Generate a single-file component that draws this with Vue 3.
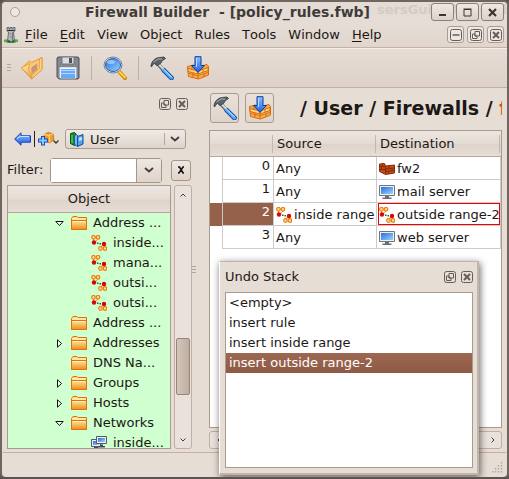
<script setup>
import { ref } from 'vue'

const menus = [
  { key: 'F', rest: 'ile', mnemonic: true },
  { key: 'E', rest: 'dit', mnemonic: true },
  { key: 'V', rest: 'iew' },
  { key: 'O', rest: 'bject' },
  { key: 'R', rest: 'ules' },
  { key: 'T', rest: 'ools' },
  { key: 'W', rest: 'indow' },
  { key: 'H', rest: 'elp', mnemonic: true },
]

const tree = [
  { label: 'Address ...', icon: 'folder', state: 'open' },
  { label: 'inside...', icon: 'range', child: true },
  { label: 'mana...', icon: 'range', child: true },
  { label: 'outsi...', icon: 'range', child: true },
  { label: 'outsi...', icon: 'range', child: true },
  { label: 'Address ...', icon: 'folder' },
  { label: 'Addresses', icon: 'folder', state: 'closed' },
  { label: 'DNS Na...', icon: 'folder' },
  { label: 'Groups', icon: 'folder', state: 'closed' },
  { label: 'Hosts', icon: 'folder', state: 'closed' },
  { label: 'Networks', icon: 'folder', state: 'open' },
  { label: 'inside...', icon: 'network', child: true },
]

const rules = [
  { source: 'Any', destination: 'fw2', icon: 'firewall' },
  { source: 'Any', destination: 'mail server', icon: 'host' },
  { source: 'inside range', sourceIcon: 'range', destination: 'outside range-2', icon: 'range', selected: true },
  { source: 'Any', destination: 'web server', icon: 'host' },
]

const history = ['<empty>', 'insert rule', 'insert inside range', 'insert outside range-2']
const current = ref(3)
const filter = ref('')
const library = ref('User')
</script>

<template>
  <svg class="sprite" aria-hidden="true">
    <defs>
      <linearGradient id="g-folder" x1="0" y1="0" x2="0" y2="1"><stop offset="0" stop-color="#ffe59a" /><stop offset="1" stop-color="#ee8e1c" /></linearGradient>
      <linearGradient id="g-blue" x1="0" y1="0" x2="1" y2="1"><stop offset="0" stop-color="#2a6fd8" /><stop offset="1" stop-color="#9ad4ff" /></linearGradient>
      <linearGradient id="g-arrow" x1="0" y1="0" x2="0" y2="1"><stop offset="0" stop-color="#8cc0ff" /><stop offset="1" stop-color="#1f5fe8" /></linearGradient>
      <linearGradient id="g-open" x1="0" y1="0" x2="1" y2="1"><stop offset="0" stop-color="#fff0c4" /><stop offset="1" stop-color="#f0a030" /></linearGradient>
    </defs>
    <symbol id="folder" viewBox="0 0 16 14">
      <path d="M.5 13.500V2.500L2 .5h4l1 1h8.500v12z" fill="#ffe08a" stroke="#e0700c" />
      <path d="M.5 4.500h15v9H.5z" fill="url(#g-folder)" stroke="#e0700c" />
      <path d="M1.500 3h13M2 5.500h12" stroke="#fff3c0" />
    </symbol>
    <symbol id="range" viewBox="0 0 16 16">
      <path d="M2.500 4v3M7 4L4 7M10 13l2-4M14 13l-1-4" stroke="#f08a20" fill="none" />
      <g fill="#ffe08a" stroke="#ee7a10" stroke-width="1.200"><circle cx="2.500" cy="2.300" r="1.800" /><circle cx="7" cy="2.300" r="1.800" /><circle cx="9.500" cy="13.500" r="1.800" /><circle cx="14" cy="13.500" r="1.800" /></g>
      <circle cx="3" cy="7.500" r="2.200" fill="#d40808" /><circle cx="13" cy="9" r="2.200" fill="#d40808" />
      <path d="M6 7.500h1.500v1.500H6zM8.500 8H10v1.500H8.500z" fill="#1a6a28" />
    </symbol>
    <symbol id="host" viewBox="0 0 16 14">
      <path d="M.5 .5h15v10H.5z" fill="#eef0f2" stroke="#70757c" />
      <path d="M2 2h12v7H2z" fill="url(#g-blue)" />
      <path d="M6 11h4v1.500h2.500V14h-9v-1.500H6z" fill="#6c7076" />
    </symbol>
    <symbol id="network" viewBox="0 0 16 14">
      <path d="M.5 3.500h9v7h-9z" fill="#e8eef4" stroke="#555b64" /><path d="M2 5h6v4H2z" fill="url(#g-blue)" />
      <path d="M3 11h4v1h1v1.500H1V12h2zM9 8.500h3v1.500h2v1.500H7V10h2z" fill="#444950" />
      <path d="M5.500 .5h10v7h-10z" fill="#e8eef4" stroke="#555b64" /><path d="M7 2h7v4H7z" fill="url(#g-blue)" />
    </symbol>
    <symbol id="firewall" viewBox="0 0 16 12">
      <path d="M.5 1l5-.5 1 2.500 9-1v8l-9 1.500-6-3z" fill="#c04a12" stroke="#8a2c06" />
      <path d="M1 3.500h5.500v2.500l9-1M1 6.500h5.500v2l9-1M3.500 1v2.500M2.500 4v2.500M10 3v2.500M13 5.500v2.500M6.500 5v6M9.500 8.500v2.500" stroke="#7c2605" stroke-width=".8" fill="none" />
    </symbol>
    <symbol id="hammer" viewBox="0 0 24 24">
      <path d="M13.500 14l8 8" stroke="#0c49ae" stroke-width="4.600" stroke-linecap="round" />
      <path d="M13.500 14l8 8" stroke="#55aaf5" stroke-width="3" stroke-linecap="round" />
      <path d="M14 13.500l7.500 7.500" stroke="#e2f4ff" />
      <path d="M7.500 7.500l5.500 6" stroke="#6b7075" stroke-width="4" />
      <path d="M8 7.500l5.500 5.500" stroke="#d5dade" stroke-width="2" />
      <path d="M1 10.500C1 6.500 4 2 9.500 1.500L14 1l1.500 1.500-3 2-2 3-3.500 2L4.500 7.500C3.500 8 2.500 9 2 10.500z" fill="#5c636a" stroke="#30353a" stroke-width=".8" />
      <path d="M3.500 6L8 3h4" stroke="#aeb6bd" fill="none" />
    </symbol>
    <symbol id="install" viewBox="0 0 24 24">
      <path d="M1.500 10.500l6-1.500 4 2 9.500-2.500 1.500 2v8.500L12.500 23l-10-2.500z" fill="#f8ac4a" stroke="#d86b08" />
      <path d="M2 12.500l10 2.500 10-3.500v3l-10 3.500-10-2.500zM3 17.500l9 2 10-3" fill="#ffd388" stroke="#d86b08" />
      <path d="M6 9.500v4M17 13.500v3M7 17v4M18 18v3M12 15v8" stroke="#d86b08" />
      <path d="M9 .7h6v8.800h3.500L12 16.500 5.500 9.500H9z" fill="url(#g-arrow)" stroke="#083f9e" />
      <path d="M10.500 2v9" stroke="#b4dcff" />
    </symbol>
    <symbol id="open" viewBox="0 0 24 24">
      <path d="M1.500 12l8-7 2 1.500L22 1.500v12L11.500 23z" fill="#fbc768" stroke="#e08a28" stroke-width=".8" />
      <path d="M10 12l8-6v8l-7 6z" fill="#d9a67c" stroke="#f3d3a4" stroke-width=".8" />
      <path d="M12 11l5-3v5l-5 4z" fill="#c9966c" />
      <path d="M1.500 12l8-4.500L8.500 13l4 9.500z" fill="url(#g-open)" stroke="#eb9a38" stroke-width=".8" />
      <path d="M11.500 23L22 13.500V1.500l-2.500 1.500v9.500L12 19.500z" fill="#ffd272" stroke="#e08a28" stroke-width=".6" />
    </symbol>
    <symbol id="save" viewBox="0 0 24 24">
      <path d="M1 2l1-1h20l1 1v20l-1 1H3l-2-2z" fill="#848891" stroke="#4e5158" />
      <path d="M6 1h12v7H6z" fill="#d8dce3" stroke="#74777d" /><path d="M13 2h3v5h-3z" fill="#4e5158" />
      <path d="M4 11.500h16V22H4z" fill="#f5faff" stroke="#d4dce8" /><path d="M5 13h14v9H5z" fill="#69a9fb" /><path d="M5 14.500h14M5 17.500h14" stroke="#b4d8ff" />
    </symbol>
    <symbol id="find" viewBox="0 0 24 24">
      <path d="M16.500 16l5.500 6" stroke="#c98200" stroke-width="4" stroke-linecap="round" /><path d="M16.500 16l5.500 5.500" stroke="#ffd64c" stroke-width="2" stroke-linecap="round" />
      <ellipse cx="10" cy="9" rx="9" ry="8" fill="#dce7f2" stroke="#78818f" /><ellipse cx="10" cy="9" rx="7.500" ry="6.500" fill="url(#g-blue)" stroke="#2463b7" />
      <ellipse cx="8" cy="6" rx="4" ry="2" fill="#c7e3ff" opacity=".6" />
    </symbol>
    <symbol id="tower" viewBox="0 0 14 16">
      <ellipse cx="7" cy="14" rx="6.500" ry="2" fill="#3a9a32" />
      <path d="M3.500 14.500l1-9.500L3 4V.5h2V2h1V.5h2V2h1V.5h2V4L9.500 5l1 9.500z" fill="#b4b6ba" stroke="#55585e" stroke-width=".8" />
      <path d="M3.500 3.500h7M4 14h2M8 14h2" stroke="#26292d" /><path d="M8.500 5.500v8" stroke="#73767c" /><path d="M5.500 7h1M6.500 10h1" stroke="#55585e" />
      <path d="M0 12.500h2.500v2.500H0zM11.500 12.500H14V15h-2.500z" fill="#4cb63e" />
    </symbol>
    <symbol id="back" viewBox="0 0 17 14">
      <path d="M.7 7L7 .8v3h9.500v6.400H7v3z" fill="url(#g-arrow)" stroke="#1640bc" /><path d="M3 6.500L6 4.500h9" stroke="#c5e4ff" fill="none" />
    </symbol>
    <symbol id="add" viewBox="0 0 22 14">
      <path d="M6 2.500L10 .5l5 1 1 6-4 3.500-5-2z" fill="#f59b24" stroke="#b96b14" stroke-width=".7" /><path d="M6 2.500l5 1 4-2M11 3.500l1 7" stroke="#ffe099" fill="none" />
      <path d="M5 4v9.500M0 8.500h10" stroke="#1451ba" stroke-width="4" /><path d="M5 5v7.500M1 8.500h8" stroke="#8cc9ff" stroke-width="2" />
      <path d="M15.500 8.500l2.500 2.500 2.500-2.500" stroke="#3c352f" fill="none" stroke-width="1.300" />
    </symbol>
    <symbol id="books" viewBox="0 0 14 15">
      <path d="M.5 1.500l4-1 2 2v10l-2 1-4-2z" fill="#168924" stroke="#075813" /><path d="M2 3v8" stroke="#83d787" />
      <path d="M4.500 3.500l2-1 2 2v9l-2 .5-2-2z" fill="#76b7f5" stroke="#195cae" /><path d="M7.500 4.500l5.500-2v9.500l-5.500 2.500z" fill="#55a3ef" stroke="#124f9d" />
      <path d="M9 6l3-1v3L9 9z" fill="#c4e5ff" />
    </symbol>
    <symbol id="float" viewBox="0 0 12 12">
      <rect x=".5" y=".5" width="11" height="11" rx="2" fill="none" stroke="#655e58" /><path d="M5 2.500h4.500V7H5zM2.500 5H5v2h2v2.500H2.500z" fill="none" stroke="#655e58" />
    </symbol>
    <symbol id="shut" viewBox="0 0 12 12">
      <rect x=".5" y=".5" width="11" height="11" rx="2" fill="none" stroke="#655e58" /><path d="M3 3l6 6M9 3L3 9" stroke="#655e58" stroke-width="2" />
    </symbol>
    <symbol id="mini" viewBox="0 0 12 12">
      <rect x=".5" y=".5" width="11" height="11" rx="2" fill="none" stroke="#655e58" /><path d="M2.500 6h7" stroke="#655e58" stroke-width="1.500" />
    </symbol>
    <symbol id="down" viewBox="0 0 10 6"><path d="M1 1l4 3.500L9 1" fill="none" stroke="#433d38" stroke-width="1.800" /></symbol>
    <symbol id="thin" viewBox="0 0 6 4"><path d="M.5 .5L3 3 5.500 .5" fill="none" stroke="#433d38" /></symbol>
  </svg>

  <main class="window">
    <header class="titlebar">
      <span class="ghost" aria-hidden="true">sersGuide4) - ged</span>
      <span class="orb"></span>
      <h1>Firewall Builder&nbsp; - [policy_rules.fwb]</h1>
      <div class="frame-buttons">
        <button aria-label="Minimize"><svg viewBox="0 0 9 9"><path d="M1 7h7" stroke="#3b3632" stroke-width="2" /></svg></button>
        <button aria-label="Maximize"><svg viewBox="0 0 9 9"><path d="M1 1.500h7v6.500H1zM.5 1h8" fill="none" stroke="#3b3632" /></svg></button>
        <button aria-label="Close"><svg viewBox="0 0 9 9"><path d="M1 1l7 7M8 1L1 8" stroke="#3b3632" stroke-width="2.200" /></svg></button>
      </div>
    </header>

    <nav class="menubar">
      <svg class="tower"><use href="#tower" /></svg>
      <button v-for="m in menus" :key="m.key" class="menu"><span :class="{ mnemonic: m.mnemonic }">{{ m.key }}</span>{{ m.rest }}</button>
      <div class="mdi">
        <button aria-label="Minimize document"><svg><use href="#mini" /></svg></button>
        <button aria-label="Restore document"><svg><use href="#float" /></svg></button>
        <button aria-label="Close document"><svg><use href="#shut" /></svg></button>
      </div>
    </nav>

    <div class="toolbar">
      <span class="grip"></span>
      <button aria-label="Open"><svg><use href="#open" /></svg></button>
      <button aria-label="Save"><svg><use href="#save" /></svg></button>
      <i></i>
      <button aria-label="Find"><svg><use href="#find" /></svg></button>
      <i></i>
      <button aria-label="Compile"><svg><use href="#hammer" /></svg></button>
      <button aria-label="Install"><svg><use href="#install" /></svg></button>
    </div>

    <div class="body">
      <aside class="side">
        <div class="dock">
          <button aria-label="Float panel"><svg><use href="#float" /></svg></button>
          <button aria-label="Close panel"><svg><use href="#shut" /></svg></button>
        </div>
        <div class="library">
          <button aria-label="Back"><svg class="back"><use href="#back" /></svg></button>
          <i></i>
          <button aria-label="New object"><svg class="add"><use href="#add" /></svg></button>
          <div class="combo">
            <svg class="books"><use href="#books" /></svg>
            <select v-model="library" aria-label="Library"><option>User</option></select>
            <svg class="down"><use href="#down" /></svg>
          </div>
        </div>
        <div class="filter">
          <label for="filter">Filter:</label>
          <div class="filter-box">
            <input id="filter" v-model="filter" type="text">
            <button aria-label="Filter history"><svg class="down"><use href="#down" /></svg></button>
          </div>
          <button class="clear" aria-label="Clear filter" @click="filter = ''"><svg viewBox="0 0 8 8"><path d="M1 1h1.500L6 7h1M7 1H6L2 7H1" fill="none" stroke="#171411" stroke-width="1.600" /></svg></button>
        </div>
        <div class="objects">
          <section class="tree">
            <h2>Object</h2>
            <ul>
              <li v-for="(n, i) in tree" :key="i" :class="{ child: n.child }">
                <svg class="twist" viewBox="0 0 9 9"><path v-if="n.state === 'open'" d="M.8 2.500h7.400L4.500 6.500z" fill="#fff" stroke="#111" /><path v-if="n.state === 'closed'" d="M2.500 .8v7.400L6.500 4.500z" fill="#fff" stroke="#111" /></svg>
                <svg class="icon"><use :href="'#' + n.icon" /></svg>
                <span>{{ n.label }}</span>
              </li>
            </ul>
          </section>
          <div class="vscroll">
            <button aria-label="Scroll up"><svg class="thin up"><use href="#thin" /></svg></button>
            <div class="track"><div class="thumb"></div></div>
            <button aria-label="Scroll down"><svg class="thin"><use href="#thin" /></svg></button>
          </div>
        </div>
      </aside>
      <div class="splitter"><span class="grip"></span></div>

      <section class="editor">
        <div class="path">
          <button aria-label="Compile firewall"><svg><use href="#hammer" /></svg></button>
          <button aria-label="Install firewall"><svg><use href="#install" /></svg></button>
          <h2>/ User / Firewalls / <span>f</span></h2>
        </div>
        <div class="policy">
          <table>
            <colgroup><col class="c-gutter"><col class="c-number"><col class="c-source"><col></colgroup>
            <thead>
              <tr><th colspan="2"></th><th>Source</th><th>Destination</th></tr>
            </thead>
            <tbody>
              <tr v-for="(r, i) in rules" :key="i" :class="{ selected: r.selected }">
                <td class="gutter"></td>
                <td class="number">{{ i }}</td>
                <td><div class="cell"><svg v-if="r.sourceIcon" class="icon"><use :href="'#' + r.sourceIcon" /></svg>{{ r.source }}</div></td>
                <td><div class="cell dest"><svg class="icon"><use :href="'#' + r.icon" /></svg>{{ r.destination }}</div></td>
              </tr>
            </tbody>
          </table>
        </div>
        <div class="hscroll">
          <button aria-label="Scroll left"><svg class="thin left"><use href="#thin" /></svg></button>
          <button aria-label="Scroll right"><svg class="thin right"><use href="#thin" /></svg></button>
        </div>
      </section>
    </div>

    <footer class="status">
      <svg class="resize" viewBox="0 0 12 12"><path d="M9.500 0v12M6.500 3v9M3.500 6v6M.5 9v3" stroke="#b5aaa0" stroke-width="1.500" stroke-dasharray="1.500 1.500" /></svg>
    </footer>

    <section class="undo">
      <header>
        <h2>Undo Stack</h2>
        <button aria-label="Float undo stack"><svg><use href="#float" /></svg></button>
        <button aria-label="Close undo stack"><svg><use href="#shut" /></svg></button>
      </header>
      <ul>
        <li v-for="(h, i) in history" :key="h"><button :class="{ current: current === i }" @click="current = i">{{ h }}</button></li>
      </ul>
    </section>
  </main>
</template>

<style>
body { margin: 0; background: #5d5350; }
</style>

<style scoped>
* { box-sizing: border-box; }
.sprite { position: absolute; width: 0; height: 0; }
.window {
  position: relative; display: flex; flex-direction: column; height: 100vh; overflow: hidden;
  border: 2px solid #716560; border-bottom-color: #5d5350; border-radius: 6px;
  background: #e6ddd5; color: #1c1815; font: 13px/20px "DejaVu Sans", sans-serif; white-space: nowrap;
}
button, input, select { margin: 0; padding: 0; border: 0; background: none; color: inherit; font: inherit; }
button { display: flex; align-items: center; justify-content: center; flex: none; }
svg { display: block; flex: none; }
h1, h2, ul { margin: 0; padding: 0; font-weight: normal; font-size: 13px; list-style: none; }

.titlebar { position: relative; display: flex; align-items: center; height: 20px; flex: none; padding: 0 3px 0 8px; background: #e5dcd5; }
.ghost { position: absolute; right: 0; top: -2px; font-weight: bold; color: #d6cbc3; }
.orb { width: 10px; height: 10px; border: 1px solid #aaa19a; border-radius: 50%; background: #eee8e2; }
.titlebar h1 { position: relative; flex: 1; padding-left: 4px; text-align: center; font-size: 14px; font-weight: bold; color: #403b38; }
.frame-buttons { position: relative; display: flex; gap: 2px; }
.frame-buttons button { width: 23px; height: 18px; border: 1px solid #8a817b; border-radius: 3px; background: linear-gradient(#eee8e4, #ddd2c9); }
.frame-buttons svg { width: 9px; height: 9px; }

.menubar { display: flex; align-items: center; height: 26px; flex: none; padding: 0 3px 0 2px; border-bottom: 1px solid #c5b2a4; background: linear-gradient(#e6ddd6, #e0d6cd); }
.tower { width: 14px; height: 16px; margin-right: 1px; }
.menu { padding: 0 6px; }
.mnemonic { text-decoration: underline; text-underline-offset: 2px; }
.mdi { display: flex; gap: 3px; margin-left: auto; }
.mdi button { width: 17px; height: 17px; border: 1px solid #aa9c92; border-radius: 3px; background: #eee7e1; }
.mdi svg, .dock svg, .undo header svg { width: 12px; height: 12px; }

.toolbar { display: flex; align-items: center; gap: 12px; height: 40px; flex: none; padding: 0 5px; border-top: 1px solid #f4eeea; border-bottom: 1px solid #c3b0a2; background: linear-gradient(#e7ddd5, #ddd1c8); }
.grip { width: 4px; height: 8px; background: repeating-linear-gradient(#b5a598 0 1px, transparent 1px 3px); }
.toolbar .grip { margin-right: -3px; }
.toolbar svg { width: 24px; height: 24px; }
.toolbar i { width: 1px; height: 24px; margin: 0 -1px; background: #c0b1a5; }

.body { display: flex; flex: 1; min-height: 0; }
.side { display: flex; flex-direction: column; width: 190px; flex: none; padding: 10px 0 3px 5px; }
.dock { display: flex; gap: 5px; justify-content: flex-end; align-items: flex-start; height: 31px; padding-right: 4px; }
.library { display: flex; align-items: center; gap: 3px; height: 20px; padding: 0 6px 0 7px; }
.library i { width: 1px; height: 16px; background: #222; }
.back { width: 17px; height: 14px; }
.add { width: 22px; height: 14px; }
.combo { position: relative; flex: 1; display: flex; align-items: center; margin-left: 2px; height: 20px; border: 1px solid #a89c92; border-radius: 3px; background: linear-gradient(#b5a79c, #b5a79c) right 20px center / 1px 12px no-repeat, linear-gradient(#f0ebe7, #dfd4cb); }
.combo select { width: 100%; height: 18px; padding-left: 24px; appearance: none; }
.books { position: absolute; left: 4px; width: 14px; height: 15px; pointer-events: none; }
.combo .down { position: absolute; right: 5px; pointer-events: none; }
.down { width: 10px; height: 6px; }
.filter { display: flex; align-items: center; height: 26px; margin-top: 8px; padding-right: 1px; }
.filter label { width: 43px; }
.filter-box { display: flex; width: 112px; height: 25px; border: 1px solid #a59688; border-radius: 3px; }
.filter input { flex: 1; min-width: 0; padding: 0 4px; background: #fff; outline: 0; }
.filter-box button { width: 25px; border-left: 1px solid #a59688; background: linear-gradient(#eee8e3, #dfd3cb); }
.filter .clear { width: 20px; height: 21px; margin-left: auto; border: 1px solid #a59688; border-radius: 3px; background: linear-gradient(#eee8e3, #dfd3cb); }
.clear svg { width: 8px; height: 8px; }
.objects { display: flex; flex: 1; gap: 3px; min-height: 0; margin-top: 2px; }
.tree { flex: 1; min-width: 0; display: flex; flex-direction: column; overflow: hidden; border: 1px solid #a99b8e; background: #d0ffd0; }
.tree h2 { height: 27px; flex: none; border-bottom: 1px solid #b6a79a; background: linear-gradient(#ede6e1, #e4dbd3 50%, #dfd3ca 55%, #e6ded7); text-align: center; line-height: 26px; }
.tree ul { min-height: 0; overflow: hidden; }
.tree li { display: flex; align-items: center; height: 20px; padding-left: 47px; }
.twist { width: 9px; height: 9px; margin-right: 7px; }
.tree .icon { margin-right: 6px; }
.tree .child { padding-left: 67px; }
.icon { width: 16px; height: 16px; }
.vscroll { width: 18px; display: flex; flex-direction: column; border: 1px solid #c0afa2; border-radius: 3px; background: #e9e1db; }
.vscroll button { height: 17px; }
.thin { width: 6px; height: 4px; }
.up { transform: rotate(180deg); }
.left { transform: rotate(90deg); }
.right { transform: rotate(-90deg); }
.track { flex: 1; padding: 0 1px; }
.track::before { content: ""; display: block; height: 59%; }
.thumb { height: 25%; border: 1px solid #998679; border-radius: 2px; background: linear-gradient(90deg, #d4c6bb, #bdaea2); }
.splitter { width: 17px; flex: none; display: flex; align-items: center; }

.editor { flex: 1; min-width: 0; display: flex; flex-direction: column; padding: 5px 5px 3px 0; }
.path { display: flex; align-items: center; gap: 6px; height: 30px; overflow: hidden; padding-left: 1px; }
.path button { width: 29px; height: 30px; border: 1px solid #aa9b8f; border-radius: 3px; background: linear-gradient(#e8e0da, #dfd4cc); }
.path svg { width: 24px; height: 24px; }
.path h2 { margin-left: 20px; font-size: 19px; font-weight: bold; line-height: 28px; }
.path h2 span { color: #d34d16; }
.policy { flex: 1; min-height: 0; margin-top: 7px; overflow: hidden; border: 1px solid #a99b8e; background: #fff; }
table { width: 100%; table-layout: fixed; border-collapse: separate; border-spacing: 0; }
.c-gutter { width: 13px; }
.c-number { width: 51px; }
.c-source { width: 103px; }
th { height: 26px; padding: 0 3px; border-bottom: 1px solid #b6a79a; background: linear-gradient(#c4b7ac, #c4b7ac) right 1px center / 1px 18px no-repeat, linear-gradient(#ede6e1, #e4dbd3 50%, #dfd3ca 55%, #e6ded7); text-align: left; font-weight: normal; }
td { height: 23px; padding: 0; border-right: 1px solid #cfcac7; border-bottom: 1px solid #cfcac7; }
.gutter { border-bottom: 0; }
.number { padding-right: 3px; text-align: right; vertical-align: top; line-height: 18px; }
.cell { display: flex; align-items: center; gap: 2px; height: 22px; padding: 2px 1px 0 2px; }
.selected .gutter, .selected .number { background: #96614b; color: #fff; }
.selected .dest { margin-left: 1px; padding-left: 0; border: 1px solid #f00000; }
.hscroll { display: flex; justify-content: space-between; height: 18px; margin-top: 3px; border: 1px solid #c0afa2; border-radius: 3px; background: #e9e1db; }
.hscroll button { width: 17px; height: 16px; }
.status { position: relative; display: flex; justify-content: flex-end; align-items: flex-end; height: 25px; flex: none; margin: 0 1px; padding: 0 2px 3px; border-top: 1px solid #c3b0a2; }
.resize { width: 12px; height: 12px; }

.undo { position: absolute; left: 217px; top: 259px; display: flex; flex-direction: column; width: 260px; height: 214px; padding: 0 4px 5px 5px; border: 1px solid #c1b5ad; border-left-color: #fff; border-right-width: 2px; border-bottom-width: 2px; background: #e6ddd5; box-shadow: 1px 2px 7px rgba(40, 30, 25, .7); }
.undo header { display: flex; align-items: center; gap: 5px; height: 30px; flex: none; }
.undo h2 { flex: 1; }
.undo ul { flex: 1; border: 1px solid #a99b8e; background: #fff; }
.undo li button { width: 100%; height: 20px; justify-content: flex-start; padding-left: 3px; }
.undo li .current { background: linear-gradient(#9d6852, #8f5a45); color: #fff; }
</style>
